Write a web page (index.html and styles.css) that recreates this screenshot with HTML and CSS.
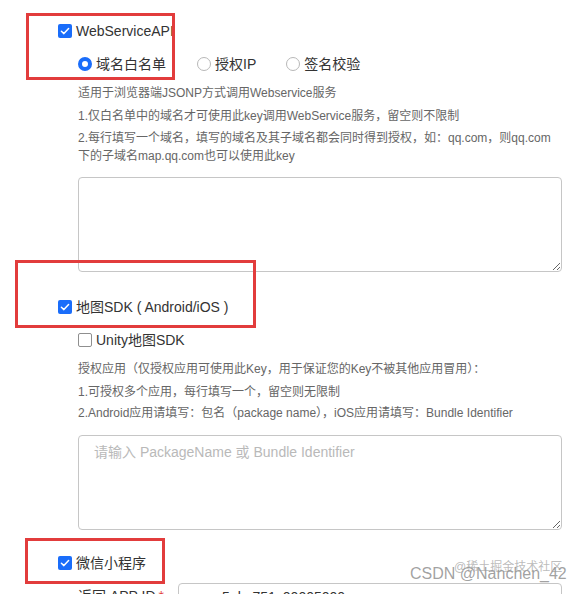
FILE: index.html
```html
<!DOCTYPE html>
<html lang="zh">
<head>
<meta charset="utf-8">
<link rel="stylesheet" href="styles.css">
</head>
<body>
<div class="page">
  <div class="check-row first">
    <span class="cb on"><svg viewBox="0 0 14 14" width="14" height="14"><path d="M3.4 7.3 L5.9 9.6 L10.6 4.6" fill="none" stroke="#fff" stroke-width="1.5" stroke-linecap="round" stroke-linejoin="round"/></svg></span>
    <span class="label">WebServiceAPI</span>
  </div>
  <div class="radio-row">
    <span class="radio-item"><span class="rd on"></span><span class="label">域名白名单</span></span>
    <span class="radio-item"><span class="rd"></span><span class="label">授权IP</span></span>
    <span class="radio-item"><span class="rd"></span><span class="label">签名校验</span></span>
  </div>
  <div class="desc desc-a">
    <p>适用于浏览器端JSONP方式调用Webservice服务</p>
    <p>1.仅白名单中的域名才可使用此key调用WebService服务，留空则不限制</p>
    <p>2.每行填写一个域名，填写的域名及其子域名都会同时得到授权，如：qq.com，则qq.com<br>下的子域名map.qq.com也可以使用此key</p>
  </div>
  <textarea class="ta ta-a"></textarea>

  <div class="check-row second">
    <span class="cb on"><svg viewBox="0 0 14 14" width="14" height="14"><path d="M3.4 7.3 L5.9 9.6 L10.6 4.6" fill="none" stroke="#fff" stroke-width="1.5" stroke-linecap="round" stroke-linejoin="round"/></svg></span>
    <span class="label">地图SDK ( Android/iOS )</span>
  </div>
  <div class="check-row sub">
    <span class="cb"></span>
    <span class="label">Unity地图SDK</span>
  </div>
  <div class="desc desc-b">
    <p>授权应用（仅授权应用可使用此Key，用于保证您的Key不被其他应用冒用）：</p>
    <p>1.可授权多个应用，每行填写一个，留空则无限制</p>
    <p>2.Android应用请填写：包名（package name），iOS应用请填写：Bundle Identifier</p>
  </div>
  <textarea class="ta ta-b" placeholder="请输入 PackageName 或 Bundle Identifier"></textarea>

  <div class="check-row third">
    <span class="cb on"><svg viewBox="0 0 14 14" width="14" height="14"><path d="M3.4 7.3 L5.9 9.6 L10.6 4.6" fill="none" stroke="#fff" stroke-width="1.5" stroke-linecap="round" stroke-linejoin="round"/></svg></span>
    <span class="label">微信小程序</span>
  </div>
  <div class="field-row">
    <span class="field-label">返回 APP ID<span class="req">*</span></span>
    <span class="field-input">wx5abc751c00005000</span>
  </div>

  <div class="mark mark-1"></div>
  <div class="mark mark-2"></div>
  <div class="mark mark-3"></div>
  <div class="wm"><span class="wm-main">CSDN @Nanchen_42</span><span class="wm-sub">@稀土掘金技术社区</span></div>
</div>
</body>
</html>
```

FILE: styles.css
```css
html, body {
  margin: 0;
  padding: 0;
  background: #fff;
}
body {
  font-family: "Liberation Sans", Arial, "Noto Sans CJK SC", sans-serif;
  color: #333;
  overflow: hidden;
}
.page {
  position: relative;
  width: 581px;
  height: 594px;
  padding-left: 58px;
  box-sizing: border-box;
}
.check-row {
  display: flex;
  align-items: center;
  height: 20px;
  font-size: 14px;
  line-height: 20px;
}
.check-row.first { padding-top: 21px; }
.check-row.second { margin-top: 25px; }
.check-row.sub { margin-top: 13px; margin-left: 20px; }
.check-row.third { margin-top: 23px; }
.cb {
  width: 14px;
  height: 14px;
  box-sizing: border-box;
  border: 1px solid #8f8f8f;
  border-radius: 2px;
  background: #fff;
  margin-right: 4px;
  display: flex;
  flex-shrink: 0;
}
.cb.on {
  border: none;
  background: #1a6dfa;
}
.label {
  color: #333;
  white-space: nowrap;
}
.radio-row {
  display: flex;
  align-items: center;
  margin-top: 13px;
  margin-left: 20px;
  height: 20px;
  font-size: 14px;
  line-height: 20px;
}
.radio-item {
  display: flex;
  align-items: center;
  margin-right: 31px;
}
.radio-item:nth-child(2) { margin-right: 30px; }
.rd {
  width: 14px;
  height: 14px;
  box-sizing: border-box;
  border: 1px solid #b8b8b8;
  border-radius: 50%;
  background: #fff;
  margin-right: 4px;
}
.rd.on {
  border: 4px solid #1a6dfa;
}
.desc {
  margin-left: 20px;
  font-size: 12px;
  line-height: 18px;
  color: #666;
}
.desc p { margin: 0; white-space: nowrap; }
.desc-a { margin-top: 10px; }
.desc-a p + p { margin-top: 5px; }
.desc-a p:last-child { margin-top: 4px; }
.desc-b { margin-top: 10px; }
.desc-b p + p { margin-top: 5px; }
.desc-b p:last-child { margin-top: 3px; }
.ta {
  display: block;
  margin-left: 20px;
  width: 484px;
  height: 95px;
  box-sizing: border-box;
  border: 1px solid #c6c6c6;
  border-radius: 4px;
  background: #fff;
  padding: 6px 15px;
  font-family: "Liberation Sans", Arial, "Noto Sans CJK SC", sans-serif;
  font-size: 14px;
  line-height: 20px;
  color: #333;
  outline: none;
}
.ta-a { margin-top: 12px; }
.ta-b { margin-top: 13px; }
.ta::placeholder { color: #b9b9b9; }
.field-row {
  display: flex;
  align-items: flex-start;
  margin-top: 10px;
  margin-left: 20px;
  font-size: 14px;
}
.field-label {
  width: 100px;
  padding-top: 3px;
  line-height: 20px;
  color: #333;
  white-space: nowrap;
}
.req { color: #e23c3c; margin-left: 3px; }
.field-input {
  width: 384px;
  height: 32px;
  box-sizing: border-box;
  border: 1px solid #c6c6c6;
  border-radius: 4px;
  padding: 3px 26px;
  line-height: 20px;
  color: #333;
}
.mark {
  position: absolute;
  border: 3px solid #e23c3c;
  box-sizing: border-box;
  pointer-events: none;
}
.mark-1 { left: 26px; top: 13px; width: 149px; height: 67px; }
.mark-2 { left: 15px; top: 260px; width: 241px; height: 68px; }
.mark-3 { left: 25px; top: 538px; width: 140px; height: 46px; }
.wm {
  position: absolute;
  left: 410px;
  top: 560px;
  width: 165px;
  height: 30px;
  pointer-events: none;
}
.wm-main {
  position: absolute;
  left: 0;
  top: 4px;
  font-size: 16px;
  line-height: 20px;
  color: rgba(120, 120, 120, 0.7);
  white-space: nowrap;
}
.wm-sub {
  position: absolute;
  left: 44px;
  top: 0;
  font-size: 12px;
  line-height: 14px;
  color: rgba(150, 150, 150, 0.65);
  white-space: nowrap;
}
```
